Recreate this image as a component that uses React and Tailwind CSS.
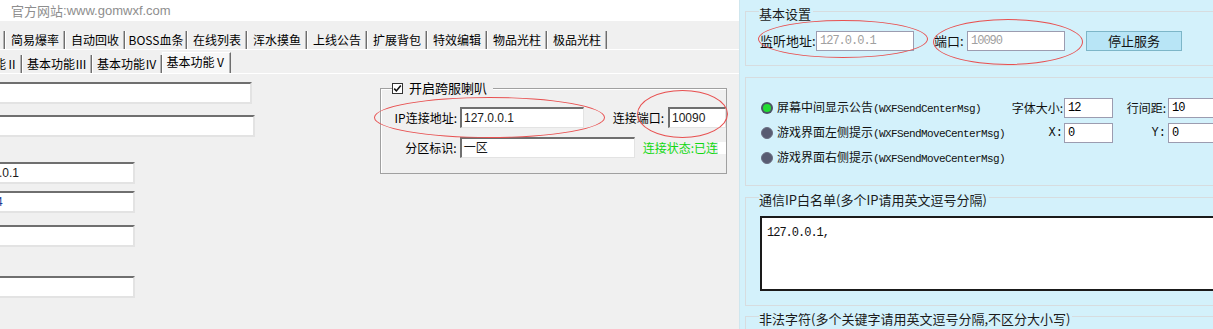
import React from "react";

const tabs1 = [
  { t: "简易爆率", w: "w-[60px]" },
  { t: "自动回收", w: "w-[60px]" },
  { t: "BOSS血条", w: "w-[62px]" },
  { t: "在线列表", w: "w-[60px]" },
  { t: "浑水摸鱼", w: "w-[60px]" },
  { t: "上线公告", w: "w-[60px]" },
  { t: "扩展背包", w: "w-[60px]" },
  { t: "特效编辑", w: "w-[60px]" },
  { t: "物品光柱", w: "w-[60px]" },
  { t: "极品光柱", w: "w-[60px]" },
];

function Tab({ children, className = "" }) {
  return (
    <div
      className={`flex items-center justify-center border-l border-l-white border-r border-r-[#6e6e6e] shadow-[inset_-1px_0_0_#b4b4b4] whitespace-nowrap shrink-0 ${className}`}
    >
      {children}
    </div>
  );
}

function Sunken({ className = "", children }) {
  return (
    <div
      className={`h-[22px] shrink-0 bg-white border-t-2 border-t-[#6f6f6f] border-r-2 border-r-[#e3e3e3] border-b-2 border-b-[#e3e3e3] flex items-center overflow-hidden text-[12px] ${className}`}
    >
      {children}
    </div>
  );
}

function GInput({ className = "", children }) {
  return (
    <div
      className={`h-[21px] shrink-0 bg-white border-t-2 border-l-2 border-t-[#6f6f6f] border-l-[#6f6f6f] border-r border-b border-r-[#e3e3e3] border-b-[#e3e3e3] flex items-center pl-[2px] text-[12px] text-[#1a1a1a] font-['Liberation_Sans','Noto_Sans_CJK_SC',sans-serif] ${className}`}
    >
      {children}
    </div>
  );
}

function CInput({ className = "", children, gray = false }) {
  return (
    <div
      className={`h-[20px] shrink-0 bg-white border border-[#9c9cb0] flex items-center pl-[3px] font-['Liberation_Mono',monospace] text-[12px] tracking-[-1px] ${gray ? "text-[#a0a0a0]" : "text-black"} ${className}`}
    >
      {children}
    </div>
  );
}

function Radio({ on }) {
  return on ? (
    <div className="w-[12px] h-[12px] rounded-full bg-[#4c5266] flex items-center justify-center shrink-0">
      <div className="w-[8px] h-[8px] rounded-full bg-[#22dd33]" />
    </div>
  ) : (
    <div className="w-[12px] h-[12px] rounded-full bg-[#585c72] border border-[#6a6e82] shrink-0" />
  );
}

function RadioText({ cn, en }) {
  return (
    <span className="whitespace-nowrap">
      <span className="text-[12px]">{cn}</span>
      <span className="font-['Liberation_Mono',monospace] text-[11px] tracking-[-0.6px]">({en})</span>
    </span>
  );
}

function GroupTitle({ children }) {
  return (
    <span className="absolute top-[-5px] left-[13px] bg-[#d3f1fb] pr-[2px] text-[13px] leading-[13px] text-[#1a1a1a] whitespace-nowrap">
      {children}
    </span>
  );
}

export default function App() {
  return (
    <div className="relative flex w-[1213px] h-[329px] overflow-hidden font-['Noto_Sans_CJK_SC','Liberation_Sans',sans-serif] text-[12px] text-black">
      {/* Left panel */}
      <div className="w-[740px] h-full bg-[#f0f0f0] flex flex-col border-r border-r-[#cfe6ee] shrink-0">
        <div className="h-[21px] shrink-0 bg-white flex items-center text-[13px] text-[#8e8e8e] whitespace-nowrap">
          <span className="ml-[-8px] mr-[6px]">：</span>
          <span>官方网站</span>
          <span className="font-['Liberation_Sans',sans-serif]">:www.gomwxf.com</span>
        </div>

        {/* Tab row 1 */}
        <div className="mt-[10px] h-[19px] shrink-0 flex border-b border-b-white">
          <Tab className="w-[5px] border-l-0" />
          {tabs1.map((t) => (
            <Tab key={t.t} className={t.w}>
              {t.t}
            </Tab>
          ))}
        </div>

        {/* Tab row 2 */}
        <div className="h-[24px] shrink-0 flex items-end border-b border-b-white">
          <Tab className="w-[22px] h-[18px] border-l-0 justify-end pr-[3px] overflow-hidden">
            <span className="whitespace-nowrap">基本功能Ⅱ</span>
          </Tab>
          <Tab className="w-[70px] h-[18px]">基本功能Ⅲ</Tab>
          <Tab className="w-[70px] h-[18px]">基本功能Ⅳ</Tab>
          <Tab className="w-[69px] h-[21px] bg-[#f7f7f7] border-t border-t-white pb-[2px]">基本功能Ⅴ</Tab>
        </div>

        {/* Content */}
        <div className="flex">
          <div className="w-[255px] flex flex-col shrink-0">
            <Sunken className="mt-[8px] w-[252px]" />
            <Sunken className="mt-[11px] w-[255px]" />
            <Sunken className="mt-[25px] w-[135px]">
              <span className="ml-[-1px] font-['Liberation_Sans',sans-serif] text-[#1a1a1a]">.0.1</span>
            </Sunken>
            <Sunken className="mt-[7px] w-[135px]">
              <span className="ml-[-4px] font-['Liberation_Sans',sans-serif] text-[#1c3a96]">4</span>
            </Sunken>
            <Sunken className="mt-[12px] w-[135px]" />
            <Sunken className="mt-[29px] w-[135px]" />
          </div>

          {/* Group box */}
          <div className="relative ml-[125px] mt-[14px] w-[347px] h-[86px] border border-[#a0a0a0] shadow-[inset_1px_1px_0_#ffffff] pt-[18px] shrink-0">
            <div className="absolute top-[-8px] left-[11px] bg-[#f0f0f0] flex items-center gap-[6px] pr-[6px] text-[13px] leading-[14px]">
              <div className="w-[11px] h-[11px] bg-white border border-[#333] flex items-center justify-center">
                <svg width="9" height="9" viewBox="0 0 9 9">
                  <path d="M1.2 4.6 L3.4 6.9 L7.8 1.6" stroke="#111" strokeWidth="1.6" fill="none" />
                </svg>
              </div>
              <span>开启跨服喇叭</span>
            </div>
            <div className="flex items-center">
              <span className="w-[76px] text-right whitespace-nowrap">IP连接地址:</span>
              <GInput className="ml-[3px] w-[124px]">127.0.0.1</GInput>
              <span className="w-[80px] text-right whitespace-nowrap">连接端口:</span>
              <GInput className="ml-[4px] w-[58px]">10090</GInput>
            </div>
            <div className="flex items-center mt-[9px]">
              <span className="w-[76px] text-right whitespace-nowrap">分区标识:</span>
              <GInput className="ml-[3px] w-[175px]">一区</GInput>
              <span className="ml-[8px] text-[#12d812] whitespace-nowrap">连接状态:已连</span>
              <span className="w-[8px] h-[12px] bg-white" />
            </div>
          </div>
        </div>
      </div>

      {/* Right panel */}
      <div className="w-[473px] h-full bg-[#d3f1fb] flex flex-col pl-[5px] overflow-hidden shrink-0 text-[#111]">
        {/* Group 1 */}
        <div className="relative shrink-0 mt-[11px] h-[55px] mr-[-20px] border border-[#d7dcdf] pt-[19px] pl-[14px]">
          <GroupTitle>基本设置</GroupTitle>
          <div className="flex items-center">
            <span className="w-[56px] text-[13px] whitespace-nowrap">监听地址:</span>
            <CInput gray className="w-[98px] h-[19px]">127.0.0.1</CInput>
            <span className="ml-[20px] w-[33px] text-[13px] whitespace-nowrap">端口:</span>
            <CInput gray className="w-[98px] h-[19px]">10090</CInput>
            <button className="ml-[21px] w-[96px] h-[20px] bg-[#b8e5f6] border border-[#7db6c8] text-[13px] leading-[18px] text-[#111]">
              停止服务
            </button>
          </div>
        </div>

        {/* Group 2 */}
        <div className="relative shrink-0 mt-[11px] h-[109px] mr-[-20px] border border-[#d7dcdf] pt-[20px] pl-[15px] flex flex-col gap-[5px]">
          <div className="flex items-center h-[20px]">
            <Radio on />
            <div className="ml-[4px] w-[223px]">
              <RadioText cn="屏幕中间显示公告" en="WXFSendCenterMsg" />
            </div>
            <span className="w-[63px] text-right whitespace-nowrap">字体大小:</span>
            <CInput className="ml-[1px] w-[49px]">12</CInput>
            <span className="w-[53px] text-right whitespace-nowrap">行间距:</span>
            <CInput className="ml-[2px] w-[60px]">10</CInput>
          </div>
          <div className="flex items-center h-[20px]">
            <Radio />
            <div className="ml-[4px] w-[223px]">
              <RadioText cn="游戏界面左侧提示" en="WXFSendMoveCenterMsg" />
            </div>
            <span className="w-[63px] text-right whitespace-nowrap font-['Liberation_Mono',monospace] text-[12px]">X:</span>
            <CInput className="ml-[1px] w-[49px]">0</CInput>
            <span className="w-[53px] text-right whitespace-nowrap font-['Liberation_Mono',monospace] text-[12px]">Y:</span>
            <CInput className="ml-[2px] w-[60px]">0</CInput>
          </div>
          <div className="flex items-center h-[20px]">
            <Radio />
            <div className="ml-[4px]">
              <RadioText cn="游戏界面右侧提示" en="WXFSendMoveCenterMsg" />
            </div>
          </div>
        </div>

        {/* Group 3 */}
        <div className="relative shrink-0 mt-[11px] h-[109px] mr-[-20px] border border-[#d7dcdf] pt-[18px] pl-[14px]">
          <GroupTitle>通信IP白名单(多个IP请用英文逗号分隔)</GroupTitle>
          <div className="h-[75px] bg-white border-2 border-[#1a1a1a] pl-[5px] pt-[6px] font-['Liberation_Mono',monospace] text-[12px] tracking-[-1px]">
            127.0.0.1,
          </div>
        </div>

        {/* Group 4 */}
        <div className="relative shrink-0 mt-[10px] h-[60px] mr-[-20px] border border-[#d7dcdf]">
          <GroupTitle>非法字符(多个关键字请用英文逗号分隔,不区分大小写)</GroupTitle>
        </div>
      </div>

      {/* Red annotation ellipses */}
      <div className="absolute left-[374px] top-[97px] w-[231px] h-[41px] rounded-[50%] border border-[#e85050] pointer-events-none" />
      <div className="absolute left-[637px] top-[90px] w-[91px] h-[48px] rounded-[50%] border border-[#e85050] pointer-events-none" />
      <div className="absolute left-[758px] top-[20px] w-[170px] h-[38px] rounded-[50%] border border-[#e85050] pointer-events-none" />
      <div className="absolute left-[933px] top-[19px] w-[150px] h-[46px] rounded-[50%] border border-[#e85050] pointer-events-none" />
    </div>
  );
}
